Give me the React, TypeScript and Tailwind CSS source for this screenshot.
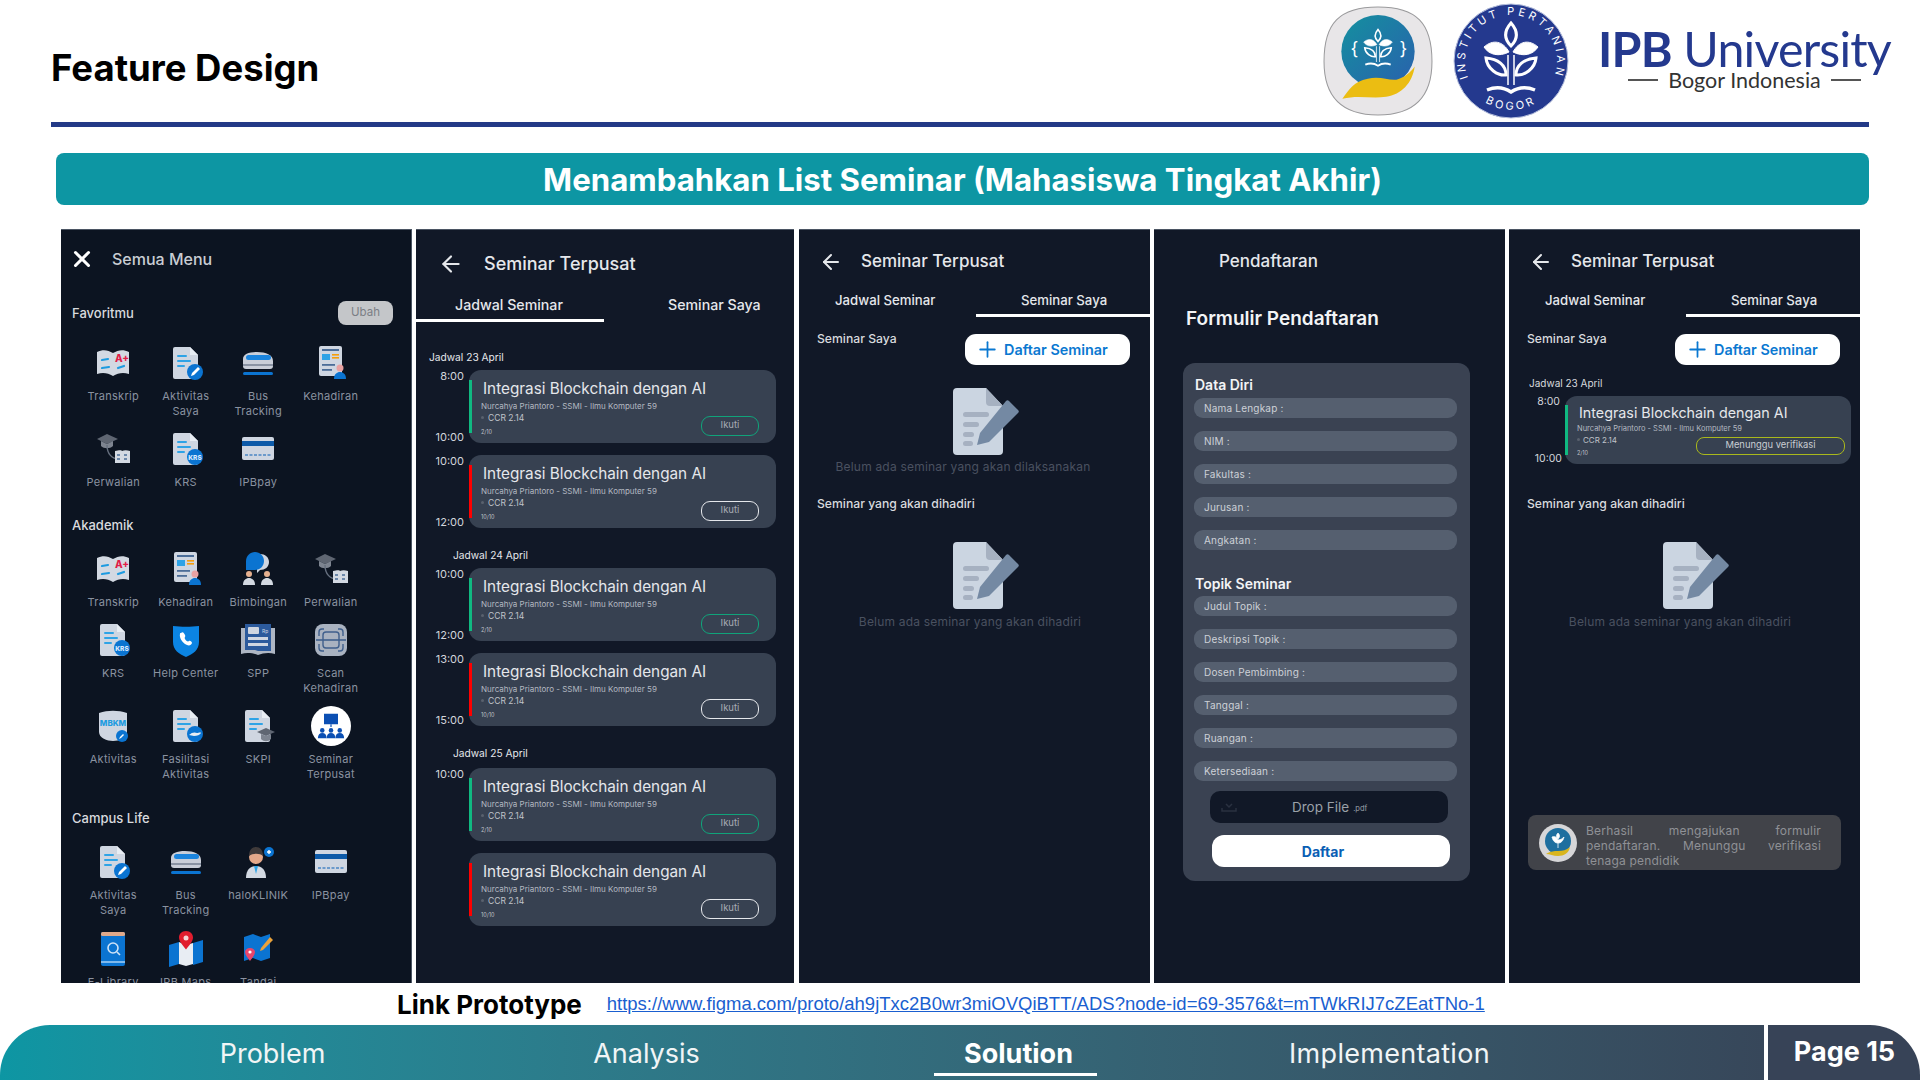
import { ArrowLeft, Plus, X } from "lucide-react";

const docBody = "M7 2h15l8 8v22a2 2 0 0 1-2 2H7a2 2 0 0 1-2-2V4a2 2 0 0 1 2-2z";

function Svg({ children }: { children: React.ReactNode }) {
  return (
    <svg viewBox="0 0 36 36" className="h-[36px] w-[36px]">
      {children}
    </svg>
  );
}

function DocBase({ lines = 3 }: { lines?: number }) {
  return (
    <>
      <path d={docBody} fill="#cfd6e1" />
      <path d="M22 2l8 8h-8z" fill="#e8edf3" />
      {lines > 0 && <rect x="9" y="10" width="10" height="2" rx="1" fill="#2ea3e6" />}
      {lines > 1 && <rect x="9" y="15" width="14" height="2" rx="1" fill="#2ea3e6" />}
      {lines > 2 && <rect x="9" y="20" width="8" height="2" rx="1" fill="#2ea3e6" />}
    </>
  );
}

function IconTranskrip() {
  return (
    <Svg>
      <path d="M2 7c6-3 11-2 16 1 5-3 10-4 16-1v22c-6-2-11-1-16 2-5-3-10-4-16-2z" fill="#d3d9e2" />
      <path d="M7 15l6-1M7 23l7-1M23 23l6-2" stroke="#1d9be0" strokeWidth="2.2" strokeLinecap="round" />
      <text x="20" y="17" fontSize="10" fontWeight="800" fill="#e11d48" fontFamily="Inter, sans-serif">A+</text>
    </Svg>
  );
}

function IconAktivitas() {
  return (
    <Svg>
      <DocBase />
      <circle cx="27" cy="27" r="8" fill="#0b74d1" />
      <path d="M23 31l1-3 6-6 2 2-6 6z" fill="#fff" />
    </Svg>
  );
}

function IconBus() {
  return (
    <Svg>
      <path d="M3 14c0-5 6-7 14-7 9 0 16 3 16 9v5c0 2-1 3-3 3H6c-2 0-3-1-3-3z" fill="#c9ced8" />
      <rect x="6" y="10" width="25" height="5" rx="2.5" fill="#1b84dd" />
      <rect x="3" y="19" width="30" height="2" fill="#8a93a3" />
      <rect x="3" y="27" width="30" height="3" rx="1.5" fill="#0b74d1" />
    </Svg>
  );
}

function IconKehadiran() {
  return (
    <Svg>
      <rect x="6" y="1" width="23" height="30" rx="2" fill="#cfd6e1" />
      <rect x="9" y="4" width="17" height="2" fill="#4b6d98" />
      <rect x="9" y="9" width="8" height="6" fill="#2ea3e6" />
      <rect x="19" y="9" width="7" height="1.6" fill="#f59e0b" />
      <rect x="19" y="12" width="7" height="1.6" fill="#f59e0b" />
      <rect x="9" y="19" width="13" height="1.8" fill="#4b6d98" />
      <rect x="9" y="24" width="10" height="1.8" fill="#4b6d98" />
      <circle cx="27" cy="23" r="3.5" fill="#e9a2a2" />
      <path d="M21 34c0-5 3-7 6-7s6 2 6 7z" fill="#0b74d1" />
    </Svg>
  );
}

function IconPerwalian() {
  return (
    <Svg>
      <path d="M2 8l10-5 11 5-11 5z" fill="#5f6672" />
      <path d="M6 10v5c3 3 9 3 12 0v-5l-6 3z" fill="#7d8490" />
      <path d="M12 14c0 9 5 14 12 14" stroke="#66707f" strokeWidth="1.4" fill="none" />
      <path d="M20 20c4-1 7-1 7 0 2-1 5-1 8 0v12H20z" fill="#d3d9e2" />
      <path d="M22 24h3M22 28h3M29 24h3M29 28h3" stroke="#4b6d98" strokeWidth="1.6" />
    </Svg>
  );
}

function IconKrs() {
  return (
    <Svg>
      <DocBase />
      <circle cx="27" cy="26" r="8" fill="#0b74d1" />
      <text x="27" y="28.5" textAnchor="middle" fontSize="6.5" fontWeight="800" fill="#dbeafe" fontFamily="Inter, sans-serif">KRS</text>
    </Svg>
  );
}

function IconPay() {
  return (
    <Svg>
      <rect x="2" y="6" width="32" height="23" rx="2" fill="#cfd6e1" />
      <rect x="2" y="10" width="32" height="5" fill="#0d5aa8" />
      <path d="M5 24h26" stroke="#4b86c4" strokeWidth="1.6" strokeDasharray="3 1.5" />
    </Svg>
  );
}

function IconBimbingan() {
  return (
    <Svg>
      <path d="M17 3c5 0 9 3 9 8s-4 8-9 8l-3 3v-4c-3-1-4-4-4-7 0-5 3-8 7-8z" fill="#cfd6e1" transform="translate(3 0)" />
      <path d="M15 1c5 0 9 4 9 9s-4 9-9 9H6v-9c0-5 4-9 9-9z" fill="#0b74d1" />
      <circle cx="9" cy="23" r="3" fill="#e5b08f" />
      <path d="M3 34c0-5 3-7 6-7s6 2 6 7z" fill="#d3d9e2" />
      <circle cx="27" cy="23" r="3" fill="#e5b08f" />
      <path d="M21 34c0-5 3-7 6-7s6 2 6 7z" fill="#d3d9e2" />
    </Svg>
  );
}

function IconHelp() {
  return (
    <Svg>
      <path d="M5 4c8 1 18 1 26 0v16c0 8-6 12-13 15C11 32 5 28 5 20z" fill="#0b84e3" />
      <path d="M13 11c2-2 3 0 4 2s-1 2 0 4 3 3 4 2 3 1 3 2c-1 3-4 3-7 1s-6-7-5-10c0-1 0-1 1-1z" fill="#fff" />
    </Svg>
  );
}

function IconSpp() {
  return (
    <Svg>
      <path d="M1 6h34v26c-6-2-12-1-17 1-5-2-11-3-17-1z" fill="#aeb6c3" />
      <path d="M5 2h26v27H18l-3-1H5z" fill="#2c5a9c" />
      <rect x="8" y="5" width="11" height="7" rx="1" fill="#cfd6e1" />
      <text x="22" y="11" fontSize="5" fill="#cfd6e1" fontFamily="Inter, sans-serif">Rp</text>
      <rect x="8" y="15" width="20" height="3" fill="#cfd6e1" />
      <rect x="8" y="21" width="20" height="3" fill="#cfd6e1" />
    </Svg>
  );
}

function IconScan() {
  return (
    <Svg>
      <rect x="2" y="2" width="32" height="32" rx="8" fill="#a9b2c0" />
      <path d="M11 7H9a3 3 0 0 0-3 3v4M25 7h2a3 3 0 0 1 3 3v4M11 29H9a3 3 0 0 1-3-3v-4M25 29h2a3 3 0 0 0 3-3v-4" stroke="#3f5f8c" strokeWidth="1.4" fill="none" />
      <rect x="10" y="10" width="16" height="16" rx="3" stroke="#3f5f8c" strokeWidth="1.4" fill="none" />
      <path d="M3 18h30" stroke="#3f5f8c" strokeWidth="1.6" />
    </Svg>
  );
}

function IconMbkm() {
  return (
    <Svg>
      <path d="M4 5c9-3 19-3 28 0v19c0 6-8 9-14 9S4 30 4 24z" fill="#cfd6e1" />
      <text x="18" y="18" textAnchor="middle" fontSize="8" fontWeight="800" fill="#1d9be0" fontFamily="Inter, sans-serif">MBKM</text>
      <circle cx="27" cy="28" r="6" fill="#0b74d1" />
      <path d="M24 31l1-2 3-3 1 1-3 3z" fill="#fff" />
    </Svg>
  );
}

function IconFasilitasi() {
  return (
    <Svg>
      <DocBase />
      <circle cx="27" cy="26" r="8" fill="#0b74d1" />
      <path d="M21 27c3-3 6-3 8-2 1 0 4-1 4 0-1 2-4 3-7 3z" fill="#e8edf3" />
    </Svg>
  );
}

function IconSkpi() {
  return (
    <Svg>
      <DocBase />
      <path d="M17 24l9-4 9 4-9 4z" fill="#5f6672" />
      <path d="M21 26v5c3 3 7 3 10 0v-5l-5 2z" fill="#7d8490" />
    </Svg>
  );
}

function IconSeminar() {
  return (
    <div className="flex h-[40px] w-[40px] items-center justify-center rounded-full bg-white">
      <svg viewBox="0 0 32 32" className="h-[28px] w-[28px]">
        <rect x="8" y="2" width="16" height="12" fill="#0b4fb3" />
        <path d="M16 14v3" stroke="#0b4fb3" strokeWidth="1.4" />
        <circle cx="6" cy="21" r="2.6" fill="#0b4fb3" />
        <path d="M1 30c0-4 2-6 5-6s5 2 5 6z" fill="#0b4fb3" />
        <circle cx="16" cy="21" r="2.6" fill="#0b4fb3" />
        <path d="M11 30c0-4 2-6 5-6s5 2 5 6z" fill="#0b4fb3" />
        <circle cx="26" cy="21" r="2.6" fill="#0b4fb3" />
        <path d="M21 30c0-4 2-6 5-6s5 2 5 6z" fill="#0b4fb3" />
      </svg>
    </div>
  );
}

function IconHalo() {
  return (
    <Svg>
      <path d="M6 34c0-8 4-12 10-12s10 4 10 12z" fill="#d3d9e2" />
      <path d="M14 22h4l-2 8z" fill="#2ea3e6" />
      <circle cx="16" cy="13" r="7" fill="#e5a98a" />
      <path d="M9 12c0-6 3-9 7-9s7 3 7 9c-3-3-10-3-14 0z" fill="#3f3a3a" />
      <circle cx="29" cy="8" r="5" fill="#0b74d1" />
      <path d="M29 6v4M27 8h4" stroke="#fff" strokeWidth="1.4" />
    </Svg>
  );
}

function IconLibrary() {
  return (
    <Svg>
      <rect x="6" y="1" width="24" height="34" rx="2" fill="#0b74d1" />
      <rect x="6" y="1" width="24" height="4" rx="1.5" fill="#e0a98a" />
      <circle cx="18" cy="17" r="5" fill="none" stroke="#cfe3f7" strokeWidth="1.6" />
      <path d="M22 21l3 3" stroke="#cfe3f7" strokeWidth="1.6" />
      <rect x="6" y="30" width="24" height="2" fill="#7fb9ec" />
    </Svg>
  );
}

function IconMaps() {
  return (
    <Svg>
      <path d="M1 14l10-3v22L1 36z" fill="#0b74d1" />
      <path d="M11 11l7 3v21l-7-2z" fill="#e8edf3" />
      <path d="M18 14l7-2v21l-7 2z" fill="#e8edf3" />
      <path d="M25 12l10-3v22l-10 3z" fill="#0b74d1" />
      <path d="M18 0c4.500 0 7 3 7 6.500 0 4-4 8-7 12-3-4-7-8-7-12C11 3 13.500 0 18 0z" fill="#e11d2e" />
      <circle cx="18" cy="7" r="2.500" fill="#f6d5d5" />
    </Svg>
  );
}

function IconTandai() {
  return (
    <Svg>
      <path d="M4 6l9-3 8 3 9-3v24l-9 3-8-3-9 3z" fill="#0b74d1" />
      <path d="M21 17l9-11 3 3-10 10-3 1z" fill="#e9a23b" />
      <path d="M10 17c3 0 5 2 5 4 0 3-3 6-5 9-2-3-5-6-5-9 0-2 2-4 5-4z" fill="#e8456b" />
      <circle cx="10" cy="21" r="1.600" fill="#fff" />
    </Svg>
  );
}

function MenuItem({ icon, label }: { icon: React.ReactNode; label: string }) {
  return (
    <div className="flex flex-col items-center pb-[8px]">
      <div className="flex h-[44px] items-center justify-center">{icon}</div>
      <p className="mt-[4px] whitespace-pre-line text-center text-[11px] leading-[15px] tracking-[0.3px] text-[#8a92a0]">
        {label}
      </p>
    </div>
  );
}

function MenuPanel() {
  return (
    <div className="h-full w-[351px] shrink-0 overflow-hidden border-t border-r border-[#4b5563] bg-[#0c1421]">
      <div className="flex h-[57px] items-center pl-[8px]">
        <X className="h-[26px] w-[26px] text-white" strokeWidth={2.8} />
        <span className="ml-[17px] text-[16px] font-medium text-[#c9cdd3]">Semua Menu</span>
      </div>
      <div className="mt-[14px] flex h-[24px] items-center justify-between pl-[11px] pr-[18px]">
        <span className="text-[13px] font-medium leading-[18px] text-[#d8dade]">Favoritmu</span>
        <span className="flex h-[24px] w-[55px] items-center justify-center rounded-lg bg-[#c4c6c9] text-[11.500px] text-[#7b7e85]">
          Ubah
        </span>
      </div>
      <div className="ml-[16px] mt-[16px] grid grid-cols-[repeat(4,72.5px)]">
        <MenuItem icon={<IconTranskrip />} label="Transkrip" />
        <MenuItem icon={<IconAktivitas />} label={"Aktivitas\nSaya"} />
        <MenuItem icon={<IconBus />} label={"Bus\nTracking"} />
        <MenuItem icon={<IconKehadiran />} label="Kehadiran" />
        <MenuItem icon={<IconPerwalian />} label="Perwalian" />
        <MenuItem icon={<IconKrs />} label="KRS" />
        <MenuItem icon={<IconPay />} label="IPBpay" />
      </div>
      <p className="ml-[11px] mt-[18px] text-[13px] font-medium leading-[18px] text-[#d8dade]">Akademik</p>
      <div className="ml-[16px] mt-[13px] grid grid-cols-[repeat(4,72.5px)]">
        <MenuItem icon={<IconTranskrip />} label="Transkrip" />
        <MenuItem icon={<IconKehadiran />} label="Kehadiran" />
        <MenuItem icon={<IconBimbingan />} label="Bimbingan" />
        <MenuItem icon={<IconPerwalian />} label="Perwalian" />
        <MenuItem icon={<IconKrs />} label="KRS" />
        <MenuItem icon={<IconHelp />} label="Help Center" />
        <MenuItem icon={<IconSpp />} label="SPP" />
        <MenuItem icon={<IconScan />} label={"Scan\nKehadiran"} />
        <MenuItem icon={<IconMbkm />} label="Aktivitas" />
        <MenuItem icon={<IconFasilitasi />} label={"Fasilitasi\nAktivitas"} />
        <MenuItem icon={<IconSkpi />} label="SKPI" />
        <MenuItem icon={<IconSeminar />} label={"Seminar\nTerpusat"} />
      </div>
      <p className="ml-[11px] mt-[19px] text-[13px] font-medium leading-[18px] text-[#d8dade]">Campus Life</p>
      <div className="ml-[16px] mt-[13px] grid grid-cols-[repeat(4,72.5px)] gap-y-[1px]">
        <MenuItem icon={<IconAktivitas />} label={"Aktivitas\nSaya"} />
        <MenuItem icon={<IconBus />} label={"Bus\nTracking"} />
        <MenuItem icon={<IconHalo />} label="haloKLINIK" />
        <MenuItem icon={<IconPay />} label="IPBpay" />
        <MenuItem icon={<IconLibrary />} label="E-Library" />
        <MenuItem icon={<IconMaps />} label="IPB Maps" />
        <MenuItem icon={<IconTandai />} label="Tandai" />
      </div>
    </div>
  );
}

type CardProps = {
  start?: string;
  end?: string;
  status: "green" | "red";
  seats: string;
};

function ScheduleCard({ start, end, status, seats }: CardProps) {
  return (
    <div className="ml-[22px] flex h-[73px] items-stretch gap-[5px]">
      <div className="flex w-[26px] flex-col items-end justify-between text-[11px] leading-[12px] text-[#d1d5db]">
        <span>{start}</span>
        <span>{end}</span>
      </div>
      <div className="flex w-[307px] items-center rounded-[12px] bg-[#374151]">
        <div className={status === "green" ? "h-[53px] w-[3px] bg-[#10b981]" : "h-[53px] w-[3px] bg-[#ff0000]"} />
        <div className="flex-1 pl-[9px] pr-[17px] pt-[1px]">
          <p className="ml-[2px] text-[15.300px] leading-[20px] text-[#e5e7eb]">Integrasi Blockchain dengan AI</p>
          <p className="mt-[2px] text-[8px] leading-[10px] text-[#b4b9c1]">Nurcahya Priantoro - SSMI - Ilmu Komputer 59</p>
          <div className="flex items-center justify-between">
            <div>
              <p className="mt-[2px] flex items-center gap-[4px] text-[8.500px] leading-[10px] text-[#c0c4cb]">
                <span className="h-[3px] w-[3px] rounded-full bg-[#59616e]" />
                CCR 2.14
              </p>
              <p className="mt-[5px] text-[5.500px] leading-[8px] text-[#c0c4cb]">{seats}</p>
            </div>
            <span
              className={
                status === "green"
                  ? "mt-[5px] flex h-[20px] w-[58px] items-center justify-center rounded-[9px] border border-[#10a37a] text-[9.500px] text-[#a7acb4]"
                  : "mt-[5px] flex h-[20px] w-[58px] items-center justify-center rounded-[9px] border border-[#e5e7eb] text-[9.500px] text-[#a7acb4]"
              }
            >
              Ikuti
            </span>
          </div>
        </div>
      </div>
    </div>
  );
}

function SchedulePanel() {
  return (
    <div className="h-full w-[378px] shrink-0 overflow-hidden border-t border-[#4b5563] bg-[#111827]">
      <div className="flex h-[67px] items-center pl-[22px]">
        <ArrowLeft className="h-[26px] w-[26px] text-[#e5e7eb]" strokeWidth={2} />
        <span className="ml-[20px] text-[18px] font-medium text-[#e5e7eb]">Seminar Terpusat</span>
      </div>
      <div className="flex">
        <div className="w-[188px] pb-[6px] pl-[39px] text-[14.200px] font-medium leading-[16px] text-[#e5e7eb]">
          Jadwal Seminar
          <div className="-ml-[39px] mt-[6px] h-[3px] bg-white" />
        </div>
        <div className="pl-[64px] text-[14.200px] font-medium leading-[16px] text-[#e5e7eb]">Seminar Saya</div>
      </div>
      <p className="ml-[13px] mt-[22px] text-[10.200px] leading-[14px] text-[#e5e7eb]">Jadwal 23 April</p>
      <div className="mt-[6px] flex flex-col gap-[12px]">
        <ScheduleCard start="8:00" end="10:00" status="green" seats="2/10" />
        <ScheduleCard start="10:00" end="12:00" status="red" seats="10/10" />
      </div>
      <p className="ml-[37px] mt-[20px] text-[10.200px] leading-[14px] text-[#e5e7eb]">Jadwal 24 April</p>
      <div className="mt-[6px] flex flex-col gap-[12px]">
        <ScheduleCard start="10:00" end="12:00" status="green" seats="2/10" />
        <ScheduleCard start="13:00" end="15:00" status="red" seats="10/10" />
      </div>
      <p className="ml-[37px] mt-[20px] text-[10.200px] leading-[14px] text-[#e5e7eb]">Jadwal 25 April</p>
      <div className="mt-[8px] flex flex-col gap-[12px]">
        <ScheduleCard start="10:00" status="green" seats="2/10" />
        <ScheduleCard status="red" seats="10/10" />
      </div>
    </div>
  );
}

function MySeminarHeader() {
  return (
    <>
      <div className="flex h-[63px] items-center pl-[20px]">
        <ArrowLeft className="h-[24px] w-[24px] text-[#e5e7eb]" strokeWidth={2} />
        <span className="ml-[18px] text-[17px] font-medium text-[#e5e7eb]">Seminar Terpusat</span>
      </div>
      <div className="flex">
        <div className="w-[177px] pl-[36px] text-[13.200px] font-medium leading-[14px] text-[#e5e7eb]">Jadwal Seminar</div>
        <div className="flex-1 text-[13.200px] font-medium leading-[14px] text-[#e5e7eb]">
          <div className="pl-[45px]">Seminar Saya</div>
          <div className="mt-[7px] h-[3px] bg-white" />
        </div>
      </div>
      <div className="mr-[20px] mt-[17px] flex items-start justify-between pl-[18px]">
        <span className="text-[12.200px] font-medium leading-[10px] text-[#d8dade]">Seminar Saya</span>
        <span className="flex h-[31px] w-[165px] items-center gap-[4px] rounded-[11px] bg-white pl-[10px] text-[14.400px] font-semibold text-[#0a78d1]">
          <Plus className="h-[25px] w-[25px]" strokeWidth={1.7} />
          Daftar Seminar
        </span>
      </div>
    </>
  );
}

function EmptyDoc() {
  return (
    <svg viewBox="0 0 66 67" className="ml-[23px] h-[67px] w-[66px]">
      <path d="M4 0h29l17 18v45a4 4 0 0 1-4 4H4a4 4 0 0 1-4-4V4a4 4 0 0 1 4-4z" fill="#cbd5e1" />
      <path d="M33 0l17 18H37a4 4 0 0 1-4-4z" fill="#a6b1c1" />
      <rect x="10" y="24" width="26" height="5" rx="2.500" fill="#a6b1c1" />
      <rect x="10" y="34" width="16" height="5" rx="2.500" fill="#a6b1c1" />
      <rect x="10" y="44" width="11" height="5" rx="2.500" fill="#a6b1c1" />
      <rect x="10" y="53" width="10" height="5" rx="2.500" fill="#a6b1c1" />
      <path d="M56 13l9 9a2 2 0 0 1 0 3L36 54 24 57l3-12L53 13a2 2 0 0 1 3 0z" fill="#7489a3" />
    </svg>
  );
}

function PhoneSpace({ className, text }: { className: string; text: string }) {
  return (
    <div className="flex flex-col items-center">
      <EmptyDoc />
      <p className={className}>{text}</p>
    </div>
  );
}

function EmptyPanel() {
  return (
    <div className="ml-[1px] h-full w-[351px] shrink-0 overflow-hidden border-t border-[#4b5563] bg-[#111827]">
      <MySeminarHeader />
      <div className="mt-[23px]">
        <PhoneSpace
          className="mr-[23px] mt-[4px] text-[12px] leading-[16px] tracking-[0.2px] text-[#4a5160]"
          text="Belum ada seminar yang akan dilaksanakan"
        />
      </div>
      <p className="ml-[18px] mt-[22px] text-[12.200px] font-medium leading-[14px] text-[#d8dade]">Seminar yang akan dihadiri</p>
      <div className="mt-[31px]">
        <PhoneSpace
          className="mr-[9px] mt-[5px] text-[12px] leading-[16px] tracking-[0.2px] text-[#4a5160]"
          text="Belum ada seminar yang akan dihadiri"
        />
      </div>
    </div>
  );
}

function FormInput({ label }: { label: string }) {
  return (
    <div className="flex h-[20px] w-[263px] items-center rounded-[9px] bg-[#555f6f] pl-[10px] text-[10px] tracking-[0.2px] text-[#cdd1d7]">
      {label}
    </div>
  );
}

function FormPanel() {
  return (
    <div className="h-full w-[351px] shrink-0 overflow-hidden border-t border-[#4b5563] bg-[#111827]">
      <div className="flex h-[64px] items-center pl-[65px] text-[17px] font-medium text-[#e5e7eb]">Pendaftaran</div>
      <p className="ml-[32px] mt-[13px] text-[19px] font-semibold leading-[24px] text-[#f3f4f6]">Formulir Pendaftaran</p>
      <div className="ml-[29px] mt-[32px] w-[287px] rounded-[12px] bg-[#3a4252] pb-[14px] pl-[11px] pt-[14px]">
        <p className="ml-[1px] text-[14px] font-semibold leading-[16px] text-[#f3f4f6]">Data Diri</p>
        <div className="mt-[5px] flex flex-col gap-[13px]">
          {["Nama Lengkap :", "NIM :", "Fakultas :", "Jurusan :", "Angkatan :"].map((label) => (
            <FormInput key={label} label={label} />
          ))}
        </div>
        <p className="ml-[1px] mt-[26px] text-[14px] font-semibold leading-[16px] text-[#f3f4f6]">Topik Seminar</p>
        <div className="mt-[4px] flex flex-col gap-[13px]">
          {["Judul Topik :", "Deskripsi Topik :", "Dosen Pembimbing :", "Tanggal :", "Ruangan :", "Ketersediaan :"].map((label) => (
            <FormInput key={label} label={label} />
          ))}
        </div>
        <div className="ml-[16px] mt-[10px] flex h-[32px] w-[238px] items-center rounded-[10px] bg-[#111827] pl-[11px]">
          <svg viewBox="0 0 16 12" className="h-[12px] w-[16px]">
            <path d="M1 7v3h14V7M5 3l3 3 3-3" stroke="#2a3140" strokeWidth="1.500" fill="none" />
          </svg>
          <span className="ml-[55px] text-[13.500px] text-[#9aa0a8]">Drop File</span>
          <span className="ml-[4px] mt-[3px] text-[7.500px] text-[#9aa0a8]">.pdf</span>
        </div>
        <div className="ml-[18px] mt-[12px] flex h-[32px] w-[238px] items-center justify-center rounded-[12px] bg-white pr-[16px] text-[14px] font-bold text-[#0a5fb4]">
          Daftar
        </div>
      </div>
    </div>
  );
}

function SmallLogo() {
  return (
    <svg viewBox="0 0 38 38" className="h-[38px] w-[38px] shrink-0">
      <circle cx="19" cy="19" r="19" fill="#d6d6d8" />
      <circle cx="19" cy="17" r="13" fill="#1e6f9f" />
      <path d="M19 9c2 2 2 4 0 6-2-2-2-4 0-6zM13 13c3-1 5 0 6 3 3 0 5-2 6-3-1 4-3 6-6 6s-5-2-6-6zM19 19v5" stroke="#fff" strokeWidth="0.800" fill="#fff" />
      <path d="M7 30c5-3 8-3 12-3 5 0 8-1 12-4-1 6-6 9-12 9-5 0-8-2-12-2z" fill="#d9b51d" />
    </svg>
  );
}

function StatusPanel() {
  return (
    <div className="h-full w-[351px] shrink-0 overflow-hidden border-t border-[#4b5563] bg-[#111827]">
      <MySeminarHeader />
      <p className="ml-[20px] mt-[12px] text-[10px] leading-[12px] text-[#d8dade]">Jadwal 23 April</p>
      <div className="ml-[27px] mt-[7px] flex h-[68px] items-stretch gap-[3px]">
        <div className="flex w-[26px] flex-col items-end justify-between text-[10.500px] leading-[11px] text-[#d1d5db]">
          <span className="mr-[2px]">8:00</span>
          <span>10:00</span>
        </div>
        <div className="flex w-[286px] items-center rounded-[12px] bg-[#374151]">
          <div className="h-[50px] w-[3px] bg-[#10b981]" />
          <div className="flex-1 pl-[9px] pr-[6px]">
            <p className="ml-[2px] text-[14.300px] leading-[18px] text-[#e5e7eb]">Integrasi Blockchain dengan AI</p>
            <p className="mt-[2px] text-[7.500px] leading-[10px] text-[#b4b9c1]">Nurcahya Priantoro - SSMI - Ilmu Komputer 59</p>
            <div className="flex items-center justify-between">
              <div>
                <p className="mt-[1px] flex items-center gap-[3px] text-[8px] leading-[10px] text-[#c0c4cb]">
                  <span className="h-[3px] w-[3px] rounded-full bg-[#59616e]" />
                  CCR 2.14
                </p>
                <p className="mt-[4px] text-[5.500px] leading-[8px] text-[#c0c4cb]">2/10</p>
              </div>
              <span className="mt-[1px] flex h-[18px] w-[149px] items-center justify-center rounded-[8px] border-[1.500px] border-[#a9b81c] text-[9.400px] text-[#c9cdd3]">
                Menunggu verifikasi
              </span>
            </div>
          </div>
        </div>
      </div>
      <p className="ml-[18px] mt-[33px] text-[12.200px] font-medium leading-[14px] text-[#d8dade]">Seminar yang akan dihadiri</p>
      <div className="mt-[31px]">
        <PhoneSpace
          className="mr-[9px] mt-[5px] text-[12px] leading-[16px] tracking-[0.2px] text-[#4a5160]"
          text="Belum ada seminar yang akan dihadiri"
        />
      </div>
      <div className="ml-[19px] mt-[185px] flex h-[55px] w-[313px] items-center rounded-[8px] bg-[#414349] pl-[11px]">
        <SmallLogo />
        <p className="ml-[9px] w-[235px] pt-[5px] text-justify text-[12px] leading-[15px] tracking-[0.2px] text-[#8f9196]">
          Berhasil mengajukan formulir pendaftaran. Menunggu verifikasi tenaga pendidik
        </p>
      </div>
    </div>
  );
}

function Plant() {
  return (
    <g stroke="#fff" fill="none" strokeWidth="3">
      <path d="M0-38C7-30 7-22 0-15-7-22-7-30 0-38z" />
      <path d="M-27-14C-18-22-8-20-2-9-12-4-22-6-27-14z" fill="#fff" strokeWidth="1" />
      <path d="M27-14C18-22 8-20 2-9 12-4 22-6 27-14z" fill="#fff" strokeWidth="1" />
      <path d="M-25-3C-24 8-13 15-5 14-5 4-13-2-25-3z" />
      <path d="M25-3C24 8 13 15 5 14 5 4 13-2 25-3z" />
      <path d="M-3-6V24M3-6V24" strokeWidth="1.500" />
      <path d="M-24 29C-14 25-6 27 0 31 6 27 14 25 24 29" strokeWidth="3.500" />
    </g>
  );
}

function HandLogo() {
  return (
    <svg viewBox="0 0 108 109" preserveAspectRatio="none" className="h-[110px] w-[110px]">
      <defs>
        <linearGradient id="handBlue" x1="0" y1="0" x2="1" y2="1">
          <stop offset="0" stopColor="#14909f" />
          <stop offset="1" stopColor="#2a60ad" />
        </linearGradient>
      </defs>
      <path d="M54 1C92 1 107 17 107 55 107 95 85 108 54 108 23 108 1 95 1 55 1 17 16 1 54 1z" fill="#e8e6e8" stroke="#9a9a9c" strokeWidth="1" />
      <circle cx="54" cy="45" r="36" fill="url(#handBlue)" />
      <g transform="translate(54 43) scale(0.52)">
        <Plant />
      </g>
      <text x="27" y="49" fontSize="18" fill="#fff" fontFamily="Inter, sans-serif">{"{"}</text>
      <text x="75" y="49" fontSize="18" fill="#fff" fontFamily="Inter, sans-serif">{"}"}</text>
      <path d="M19 92C26 82 30 75 44 72 56 69 64 74 72 73 80 71 86 66 90 60 88 76 77 88 62 90 46 92 34 88 19 92z" fill="#ebbd12" />
    </svg>
  );
}

function CrestLogo() {
  return (
    <svg viewBox="-58 -58 116 116" className="h-[116px] w-[116px]">
      <circle r="57" fill="#24398e" stroke="#b9c2de" strokeWidth="1" />
      <defs>
        <path id="crestTop" d="M-38 26A46 46 0 1 1 38 26" />
        <path id="crestBottom" d="M-36 33A49 49 0 0 0 36 33" />
      </defs>
      <text fontSize="11" fill="#fff" letterSpacing="3.500" fontFamily="Inter, sans-serif">
        <textPath href="#crestTop" startOffset="50%" textAnchor="middle">INSTITUT PERTANIAN</textPath>
      </text>
      <text fontSize="11" fill="#fff" letterSpacing="3" fontFamily="Inter, sans-serif">
        <textPath href="#crestBottom" startOffset="50%" textAnchor="middle">BOGOR</textPath>
      </text>
      <Plant />
    </svg>
  );
}

function Wordmark() {
  return (
    <div className="flex w-[293px] flex-col items-center pb-[4px] font-['Lato',sans-serif] text-[#24398e]">
      <p className="whitespace-nowrap text-[48.400px] leading-[42px] tracking-[-0.8px]">
        <span className="font-bold">IPB</span> University
      </p>
      <div className="flex items-center gap-[10px] text-[21.500px] leading-[22px] text-[#333]">
        <span className="h-[2px] w-[30px] bg-[#555]" />
        Bogor Indonesia
        <span className="h-[2px] w-[30px] bg-[#555]" />
      </div>
    </div>
  );
}

function Footer() {
  const itemClass = "flex h-full flex-col items-center pt-[11px] text-[27px] font-normal leading-[36px] text-[#f1f5f6]";
  return (
    <div className="flex h-[55px] text-white">
      <div className="flex w-[1764px] rounded-tl-[50px] bg-gradient-to-r from-[#0d96a3] to-[#37475a] pl-[85px]">
        <div className={`${itemClass} w-[375px]`}>Problem</div>
        <div className={`${itemClass} w-[373px]`}>Analysis</div>
        <div className="flex h-full w-[371px] flex-col items-center pt-[11px] text-[27px] font-bold leading-[36px]">
          Solution
          <div className="mr-[7px] mt-[1px] h-[3px] w-[163px] bg-white" />
        </div>
        <div className={`${itemClass} w-[371px] tracking-[0.3px]`}>Implementation</div>
      </div>
      <div className="ml-[4px] flex flex-1 items-center justify-center rounded-tr-[50px] bg-[#374357] pl-[1px] text-[27px] font-bold">
        Page 15
      </div>
    </div>
  );
}

export default function App() {
  return (
    <div className="flex h-[1080px] w-[1920px] flex-col overflow-hidden bg-white font-['Inter',sans-serif]">
      <header className="flex h-[122px] items-center justify-between pl-[51px] pr-[29px]">
        <h1 className="pt-[14px] text-[36.500px] font-bold text-black">Feature Design</h1>
        <div className="flex items-center">
          <HandLogo />
          <div className="ml-[20px]">
            <CrestLogo />
          </div>
          <div className="ml-[29px]">
            <Wordmark />
          </div>
        </div>
      </header>
      <div className="ml-[51px] h-[5px] w-[1818px] bg-[#233a87]" />
      <div className="ml-[56px] mt-[26px] flex h-[52px] w-[1813px] items-center justify-center rounded-[8px] bg-[#0d96a3] pt-[2px] text-[31.200px] font-bold text-white">
        Menambahkan List Seminar (Mahasiswa Tingkat Akhir)
      </div>
      <div className="ml-[61px] mt-[24px] flex h-[754px] gap-[4px]">
        <MenuPanel />
        <SchedulePanel />
        <EmptyPanel />
        <FormPanel />
        <StatusPanel />
      </div>
      <div className="flex h-[42px] items-center pl-[397px]">
        <span className="text-[26px] font-bold text-black">Link Prototype</span>
        <a className="ml-[25px] font-['Liberation_Sans',Arial,sans-serif] text-[18.500px] text-[#1a5fd0] underline">
          https://www.figma.com/proto/ah9jTxc2B0wr3miOVQiBTT/ADS?node-id=69-3576&t=mTWkRIJ7cZEatTNo-1
        </a>
      </div>
      <Footer />
    </div>
  );
}
